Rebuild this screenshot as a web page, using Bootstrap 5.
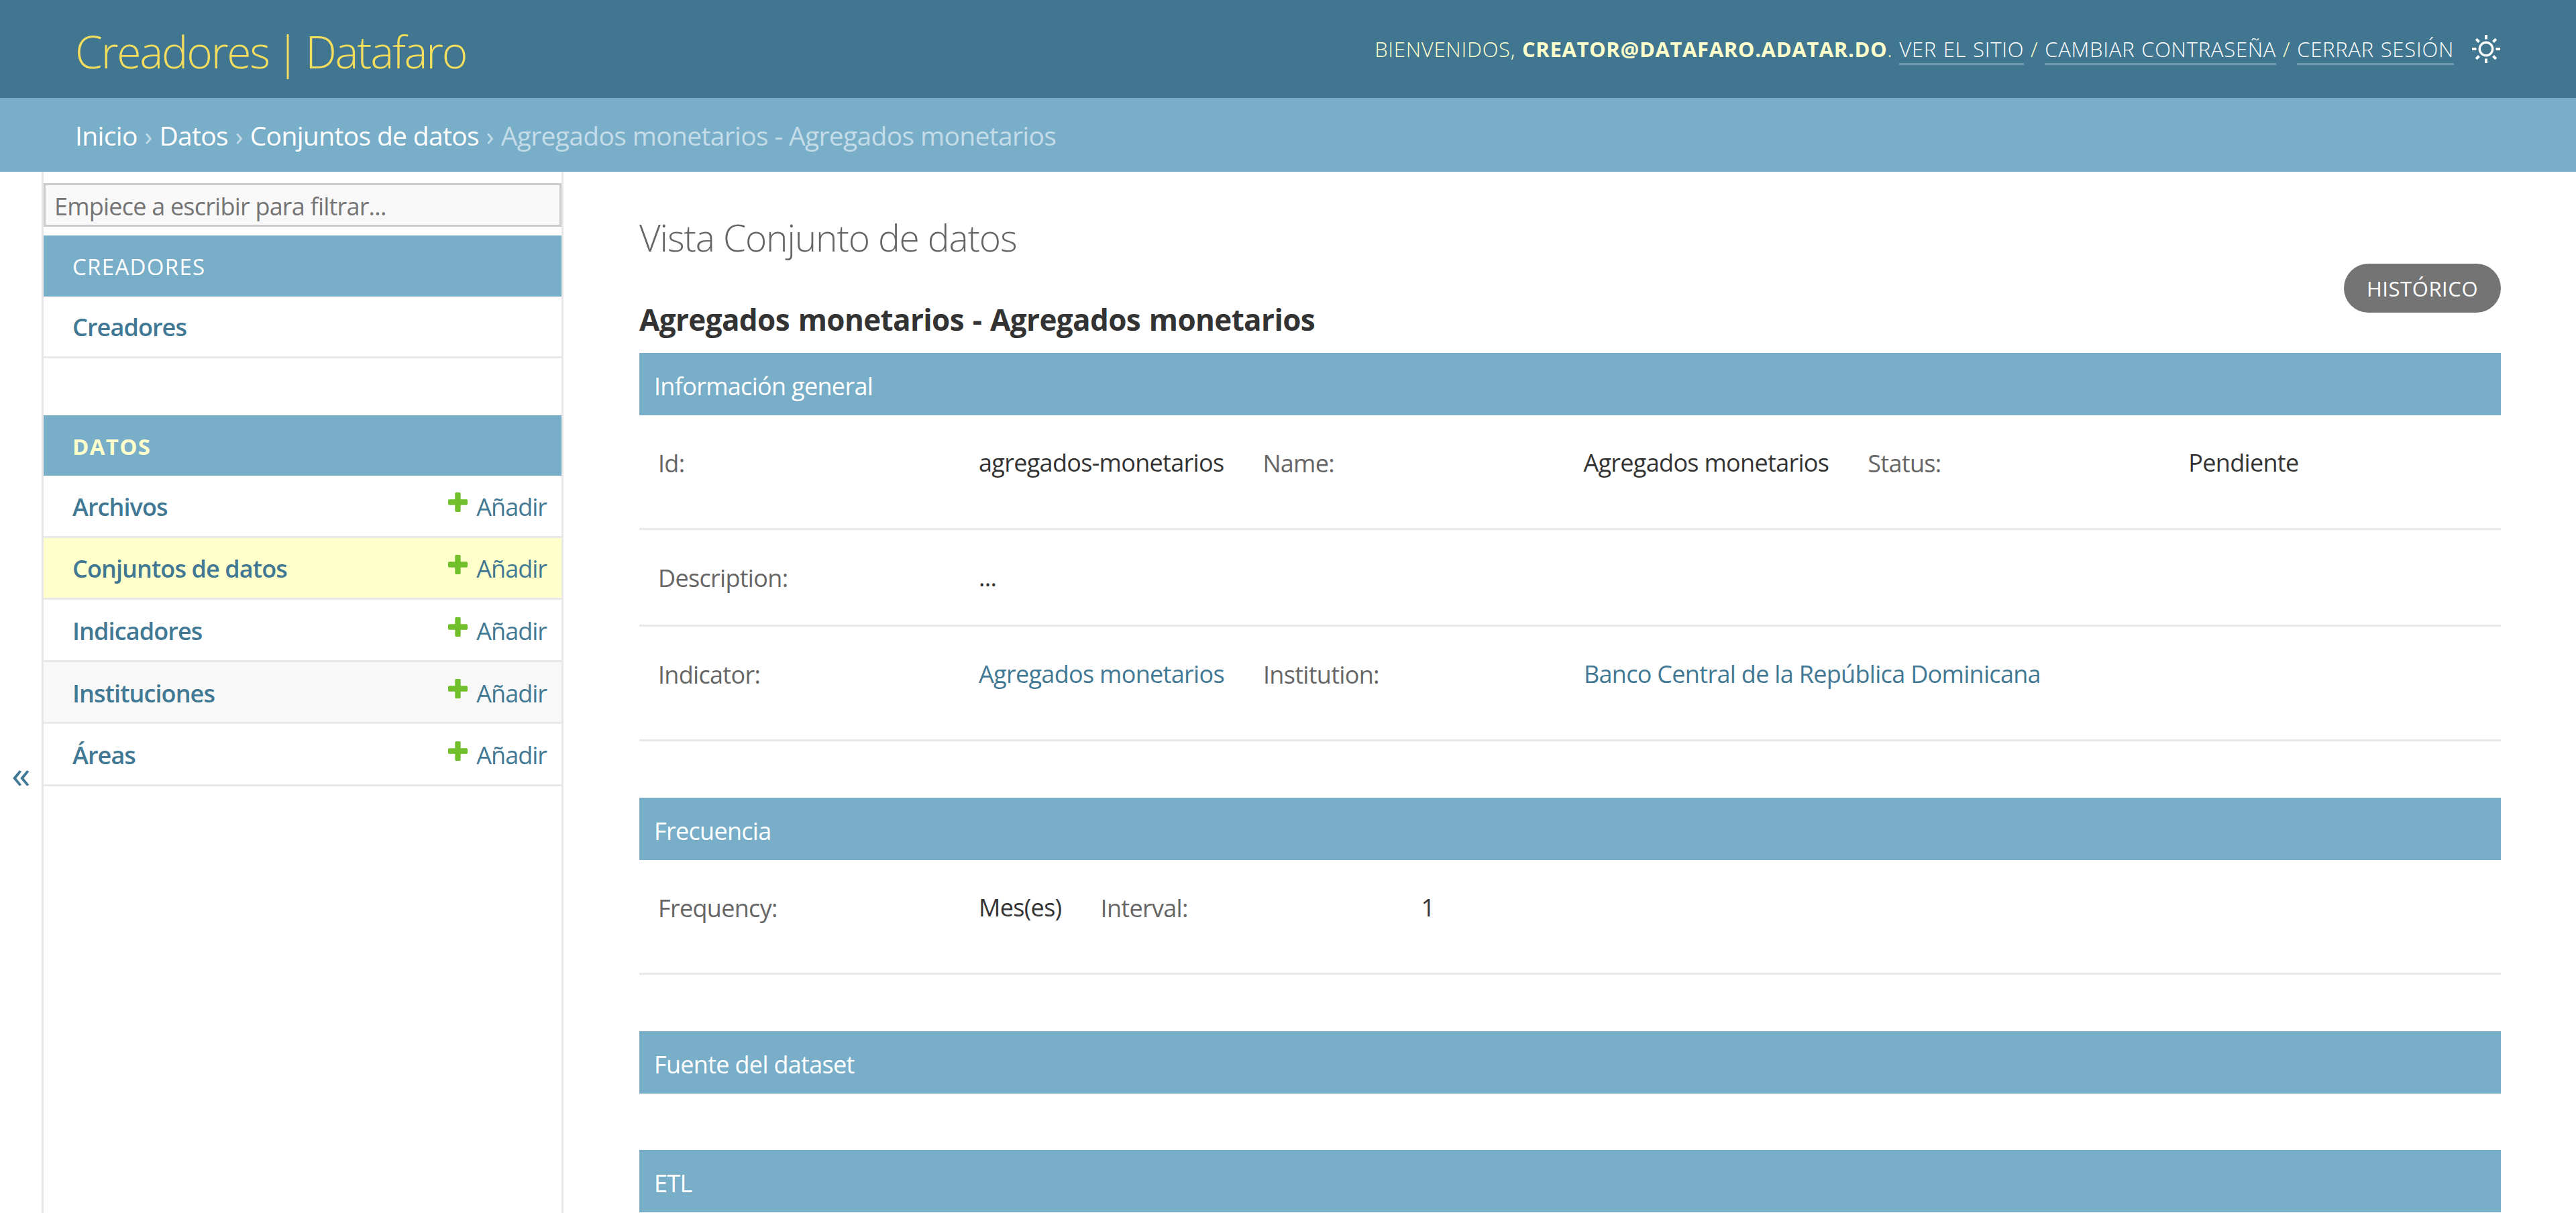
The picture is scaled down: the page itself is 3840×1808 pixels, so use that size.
<!DOCTYPE html>
<html lang="es">
<head>
    <meta charset="UTF-8">
    <meta name="viewport" content="width=device-width, initial-scale=1.0">
    <title>Agregados monetarios - Agregados monetarios | Creadores | Datafaro</title>
    <link href="https://cdn.jsdelivr.net/npm/bootstrap@5.3.2/dist/css/bootstrap.min.css" rel="stylesheet">
    <style>
        :root { --primary: #79aec8; --secondary: #417690; --link: #417893; --hairline: #e8e8e8; }
        body { background: #fff; color: #333; font-family: 'Open Sans', 'Segoe UI', sans-serif; font-size: 36px; line-height: 56px; letter-spacing: -.69px; white-space: nowrap; }
        a { color: var(--link); text-decoration: none; }
        .page { height: 1808px; }

        /* cabecera */
        .top-bar { height: 146px; padding: 0 113px 0 112px; background: var(--secondary); color: #ffc; }
        .site-name { font-size: 66px; font-weight: 300; line-height: 90px; letter-spacing: -2.2px; word-spacing: -4.5px; color: #f5dd5d; padding-top: 5px; }
        .user-tools { font-size: 31px; font-weight: 300; line-height: 42px; letter-spacing: .75px; word-spacing: 1px; }
        .user-tools a { color: #fff; border-bottom: 3px solid #6f9ab0; }
        .user-tools strong { font-weight: 700; letter-spacing: .63px; }
        .sun { width: 42px; height: 42px; margin-left: 27px; }
        .crumbs { height: 110px; padding: 2px 0 0 112px; background: var(--primary); color: #c4dce8; font-size: 39px; letter-spacing: -.65px; }
        .crumbs a { color: #fff; }
        .crumbs i { font-style: normal; margin: 0 1.3px; }

        /* barra lateral */
        .toggle-nav { width: 62px; color: var(--link); font-size: 57px; padding-top: 290px; }
        .side-nav { width: 778px; border: solid var(--hairline); border-width: 0 3px 0 3px; padding-top: 17px; }
        .nav-filter { height: 65px; margin-bottom: 13px; padding: 5px 13px 0; border: 3px solid #ccc; background: #f8f8f8; color: #757575; letter-spacing: -.79px; }
        .side-caption { height: 90.5px; padding: 4px 43px 0; background: var(--primary); color: #fff; font-size: 33px; letter-spacing: 1.3px; }
        .side-caption.current-app { color: #ffc; font-weight: 700; }
        .side-row { height: 92.6px; padding: 4px 22px 0 43px; border-bottom: 3px solid var(--hairline); font-weight: 600; letter-spacing: -.9px; }
        .side-row .add-link { font-weight: 400; letter-spacing: -1px; }
        .side-row svg { width: 29px; height: 29px; margin: 0 13px 14px 0; }
        .side-row.current { background: #ffc; }
        .side-row.striped { background: #f8f8f8; }
        .side-module { margin-bottom: 84.5px; }

        /* contenido */
        .main-col { padding: 0 112px 0 113px; }
        .page-title { height: 186px; padding-top: 60px; font-size: 55px; font-weight: 300; line-height: 76px; letter-spacing: -1.12px; color: #666; margin: 0; }
        .object-row { height: 84px; }
        .object-name { font-size: 44px; font-weight: 700; line-height: 62px; letter-spacing: -.63px; word-spacing: 2px; margin: 3px 0 0; }
        .history-btn { width: 234px; height: 73px; margin-top: -49px; border-radius: 37px; background: #747474; color: #fff; font-size: 31px; letter-spacing: .56px; }
        .section-title { height: 93px; margin: 0; padding: 6px 22px 0; background: var(--primary); color: #fff; font-size: 36px; font-weight: 400; line-height: 56px; }
        .section-block { margin-bottom: 84px; }
        .form-line { height: 171px; padding: 43px 28px 0; border-bottom: 3px solid var(--hairline); }
        .form-line.single { height: 144px; }
        .field-label { width: 478px; color: #666; padding-top: 1px; }
        .field-box { margin-right: 58px; }
    </style>
</head>
<body>
<div class="page d-flex flex-column overflow-hidden">
    <header class="top-bar d-flex flex-shrink-0 align-items-center justify-content-between">
        <div class="site-name">Creadores | Datafaro</div>
        <div class="d-flex align-items-center">
            <div class="user-tools">BIENVENIDOS, <strong>CREATOR@DATAFARO.ADATAR.DO</strong>. <a href="#">VER EL SITIO</a> / <a href="#">CAMBIAR CONTRASEÑA</a> / <a href="#">CERRAR SESIÓN</a></div>
            <svg class="sun" viewBox="-21 -21 42 42" fill="none" stroke="#fff">
                <circle r="9.7" stroke-width="3.4"/>
                <path stroke-width="4" d="M0-21v6.500M0 21v-6.500M-21 0h6.500M21 0h-6.500M-14.800-14.800l4.300 4.300M14.800-14.800l-4.300 4.300M-14.800 14.800l4.300-4.300M14.800 14.800l-4.300-4.300"/>
            </svg>
        </div>
    </header>

    <nav class="crumbs d-flex flex-shrink-0 align-items-center">
        <div><a href="#">Inicio</a> <i>›</i> <a href="#">Datos</a> <i>›</i> <a href="#">Conjuntos de datos</a> <i>›</i> Agregados monetarios - Agregados monetarios</div>
    </nav>

    <div class="d-flex flex-grow-1">
        <div class="toggle-nav d-flex flex-shrink-0 align-items-center justify-content-center"><span class="mb-5">«</span></div>

        <aside class="side-nav flex-shrink-0">
            <div class="nav-filter d-flex align-items-center">Empiece a escribir para filtrar...</div>
            <div class="side-module">
                <div class="side-caption d-flex align-items-center">CREADORES</div>
                <div class="side-row d-flex align-items-center"><a href="#">Creadores</a></div>
            </div>
            <div class="side-module">
                <div class="side-caption current-app d-flex align-items-center">DATOS</div>
                <div class="side-row d-flex align-items-center justify-content-between">
                    <a href="#">Archivos</a>
                    <a href="#" class="add-link d-flex align-items-center"><svg viewBox="0 0 29 29"><path fill="#70bf2b" d="M12 0h5q1.700 0 1.700 1.700v8.600h8.600q1.700 0 1.700 1.700v5q0 1.700-1.700 1.700h-8.600v8.600q0 1.700-1.700 1.700h-5q-1.700 0-1.700-1.700v-8.600h-8.600q-1.700 0-1.700-1.700v-5q0-1.700 1.700-1.700h8.600v-8.600q0-1.700 1.700-1.700z"/></svg>Añadir</a>
                </div>
                <div class="side-row current d-flex align-items-center justify-content-between">
                    <a href="#">Conjuntos de datos</a>
                    <a href="#" class="add-link d-flex align-items-center"><svg viewBox="0 0 29 29"><path fill="#70bf2b" d="M12 0h5q1.700 0 1.700 1.700v8.600h8.600q1.700 0 1.700 1.700v5q0 1.700-1.700 1.700h-8.600v8.600q0 1.700-1.700 1.700h-5q-1.700 0-1.700-1.700v-8.600h-8.600q-1.700 0-1.700-1.700v-5q0-1.700 1.700-1.700h8.600v-8.600q0-1.700 1.700-1.700z"/></svg>Añadir</a>
                </div>
                <div class="side-row d-flex align-items-center justify-content-between">
                    <a href="#">Indicadores</a>
                    <a href="#" class="add-link d-flex align-items-center"><svg viewBox="0 0 29 29"><path fill="#70bf2b" d="M12 0h5q1.700 0 1.700 1.700v8.600h8.600q1.700 0 1.700 1.700v5q0 1.700-1.700 1.700h-8.600v8.600q0 1.700-1.700 1.700h-5q-1.700 0-1.700-1.700v-8.600h-8.600q-1.700 0-1.700-1.700v-5q0-1.700 1.700-1.700h8.600v-8.600q0-1.700 1.700-1.700z"/></svg>Añadir</a>
                </div>
                <div class="side-row striped d-flex align-items-center justify-content-between">
                    <a href="#">Instituciones</a>
                    <a href="#" class="add-link d-flex align-items-center"><svg viewBox="0 0 29 29"><path fill="#70bf2b" d="M12 0h5q1.700 0 1.700 1.700v8.600h8.600q1.700 0 1.700 1.700v5q0 1.700-1.700 1.700h-8.600v8.600q0 1.700-1.700 1.700h-5q-1.700 0-1.700-1.700v-8.600h-8.600q-1.700 0-1.700-1.700v-5q0-1.700 1.700-1.700h8.600v-8.600q0-1.700 1.700-1.700z"/></svg>Añadir</a>
                </div>
                <div class="side-row d-flex align-items-center justify-content-between">
                    <a href="#">Áreas</a>
                    <a href="#" class="add-link d-flex align-items-center"><svg viewBox="0 0 29 29"><path fill="#70bf2b" d="M12 0h5q1.700 0 1.700 1.700v8.600h8.600q1.700 0 1.700 1.700v5q0 1.700-1.700 1.700h-8.600v8.600q0 1.700-1.700 1.700h-5q-1.700 0-1.700-1.700v-8.600h-8.600q-1.700 0-1.700-1.700v-5q0-1.700 1.700-1.700h8.600v-8.600q0-1.700 1.700-1.700z"/></svg>Añadir</a>
                </div>
            </div>
        </aside>

        <main class="main-col flex-grow-1">
            <h1 class="page-title">Vista Conjunto de datos</h1>
            <div class="object-row d-flex justify-content-between align-items-start">
                <h2 class="object-name">Agregados monetarios - Agregados monetarios</h2>
                <a href="#" class="history-btn d-flex align-items-center justify-content-center">HISTÓRICO</a>
            </div>

            <section class="section-block">
                <h2 class="section-title d-flex align-items-center">Información general</h2>
                <div class="form-line d-flex">
                    <div class="field-box d-flex"><div class="field-label">Id:</div><div>agregados-monetarios</div></div>
                    <div class="field-box d-flex"><div class="field-label">Name:</div><div>Agregados monetarios</div></div>
                    <div class="field-box d-flex"><div class="field-label">Status:</div><div>Pendiente</div></div>
                </div>
                <div class="form-line single d-flex">
                    <div class="field-box d-flex"><div class="field-label">Description:</div><div>...</div></div>
                </div>
                <div class="form-line d-flex">
                    <div class="field-box d-flex"><div class="field-label">Indicator:</div><div><a href="#">Agregados monetarios</a></div></div>
                    <div class="field-box d-flex"><div class="field-label">Institution:</div><div><a href="#">Banco Central de la República Dominicana</a></div></div>
                </div>
            </section>

            <section class="section-block">
                <h2 class="section-title d-flex align-items-center">Frecuencia</h2>
                <div class="form-line d-flex">
                    <div class="field-box d-flex"><div class="field-label">Frequency:</div><div>Mes(es)</div></div>
                    <div class="field-box d-flex"><div class="field-label">Interval:</div><div>1</div></div>
                </div>
            </section>

            <section class="section-block">
                <h2 class="section-title d-flex align-items-center">Fuente del dataset</h2>
            </section>

            <section>
                <h2 class="section-title d-flex align-items-center">ETL</h2>
            </section>
        </main>
    </div>
</div>
<script src="https://cdn.jsdelivr.net/npm/bootstrap@5.3.2/dist/js/bootstrap.bundle.min.js"></script>
</body>
</html>
